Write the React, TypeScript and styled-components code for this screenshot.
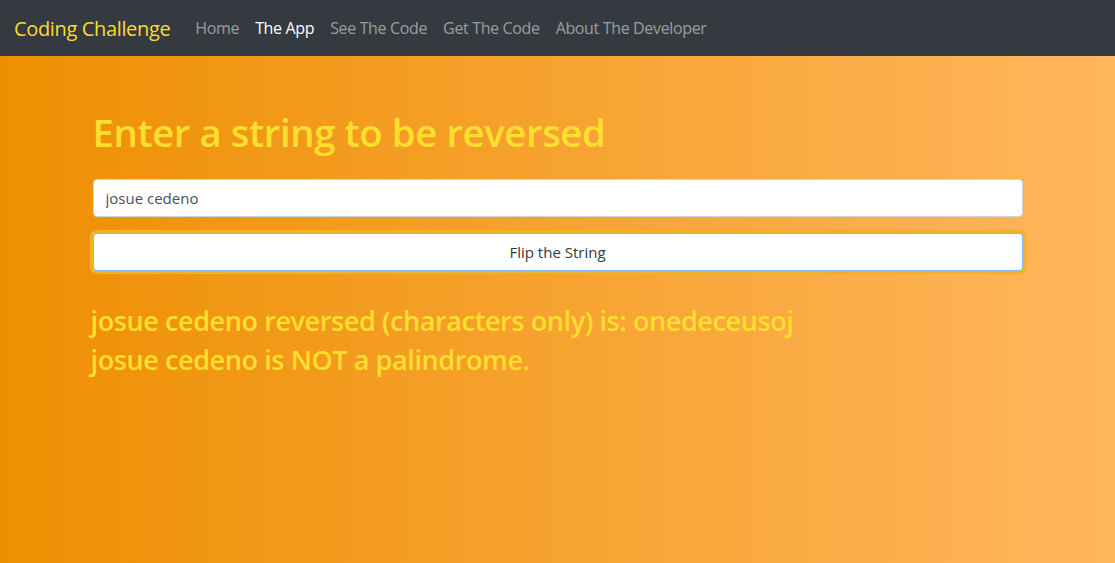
import React, { useState } from "react";
import styled, { createGlobalStyle } from "styled-components";

const GlobalStyle = createGlobalStyle`
  html, body {
    margin: 0;
    padding: 0;
  }
  body {
    font-family: "Open Sans", "Noto Sans", sans-serif;
    font-size: 16px;
    color: #212529;
  }
  * {
    box-sizing: border-box;
  }
`;

/* ---------- navbar ---------- */
const NavBar = styled.nav`
  height: 56px;
  background-color: #343a40;
  display: flex;
  align-items: center;
  padding: 0 16px 0 14px;
`;

const Brand = styled.a`
  font-size: 20px;
  color: #ffd92f;
  margin-right: 17px;
  letter-spacing: -0.35px;
  text-decoration: none;
`;

const NavList = styled.ul`
  display: flex;
  list-style: none;
  margin: 0;
  padding: 0;
`;

const NavLink = styled.a<{ $active?: boolean }>`
  display: block;
  padding: 8px;
  font-size: 16px;
  letter-spacing: -0.35px;
  color: ${(p) => (p.$active ? "#ffffff" : "rgba(255, 255, 255, 0.5)")};
  text-decoration: none;
`;

/* ---------- main ---------- */
const Main = styled.main`
  min-height: calc(100vh - 56px);
  background: linear-gradient(to right, #ee8f02, #ffb65d);
`;

const Container = styled.div`
  width: 930px;
  margin: 0 auto;
  padding-top: 52px;
`;

const Heading = styled.h1`
  margin: 0 0 23px;
  font-size: 38.3px;
  font-weight: 600;
  line-height: 48px;
  letter-spacing: -0.4px;
  color: #ffdf2e;
`;

const TextInput = styled.input`
  display: block;
  width: 100%;
  height: 38px;
  padding: 6px 12px;
  font-family: inherit;
  font-size: 15px;
  color: #495057;
  background: #fff;
  border: 1px solid #ced4da;
  border-radius: 4px;
  outline: none;
  margin-bottom: 16px;
`;

const FlipButton = styled.button`
  display: block;
  width: 100%;
  height: 38px;
  font-family: inherit;
  font-size: 15px;
  color: #343a40;
  background: #fff;
  border: 1px solid #80bdff;
  border-radius: 4px;
  box-shadow: 0 0 0 3px #f0b12b;
  cursor: pointer;
`;

const Results = styled.div`
  margin-top: 33px;
  margin-left: -2px;
`;

const ResultLine = styled.h3`
  margin: 0 0 5px;
  font-size: 27px;
  font-weight: 600;
  line-height: 34px;
  letter-spacing: -0.4px;
  color: #ffdf2e;
`;

const links = ["Home", "The App", "See The Code", "Get The Code", "About The Developer"];

const App: React.FC = () => {
  const [value, setValue] = useState("josue cedeno");
  const [word] = useState("josue cedeno");

  const reversed = word.replace(/[^a-z0-9]/gi, "").split("").reverse().join("");
  const clean = word.replace(/[^a-z0-9]/gi, "").toLowerCase();
  const isPalindrome = clean === clean.split("").reverse().join("");

  return (
    <>
      <GlobalStyle />
      <NavBar>
        <Brand href="#">Coding Challenge</Brand>
        <NavList>
          {links.map((l) => (
            <li key={l}>
              <NavLink href="#" $active={l === "The App"}>
                {l}
              </NavLink>
            </li>
          ))}
        </NavList>
      </NavBar>
      <Main>
        <Container>
          <Heading>Enter a string to be reversed</Heading>
          <TextInput value={value} onChange={(e) => setValue(e.target.value)} />
          <FlipButton type="button">Flip the String</FlipButton>
          <Results>
            <ResultLine>
              {word} reversed (characters only) is: {reversed}
            </ResultLine>
            <ResultLine>
              {word} is {isPalindrome ? "" : "NOT "}a palindrome.
            </ResultLine>
          </Results>
        </Container>
      </Main>
    </>
  );
};

export default App;
